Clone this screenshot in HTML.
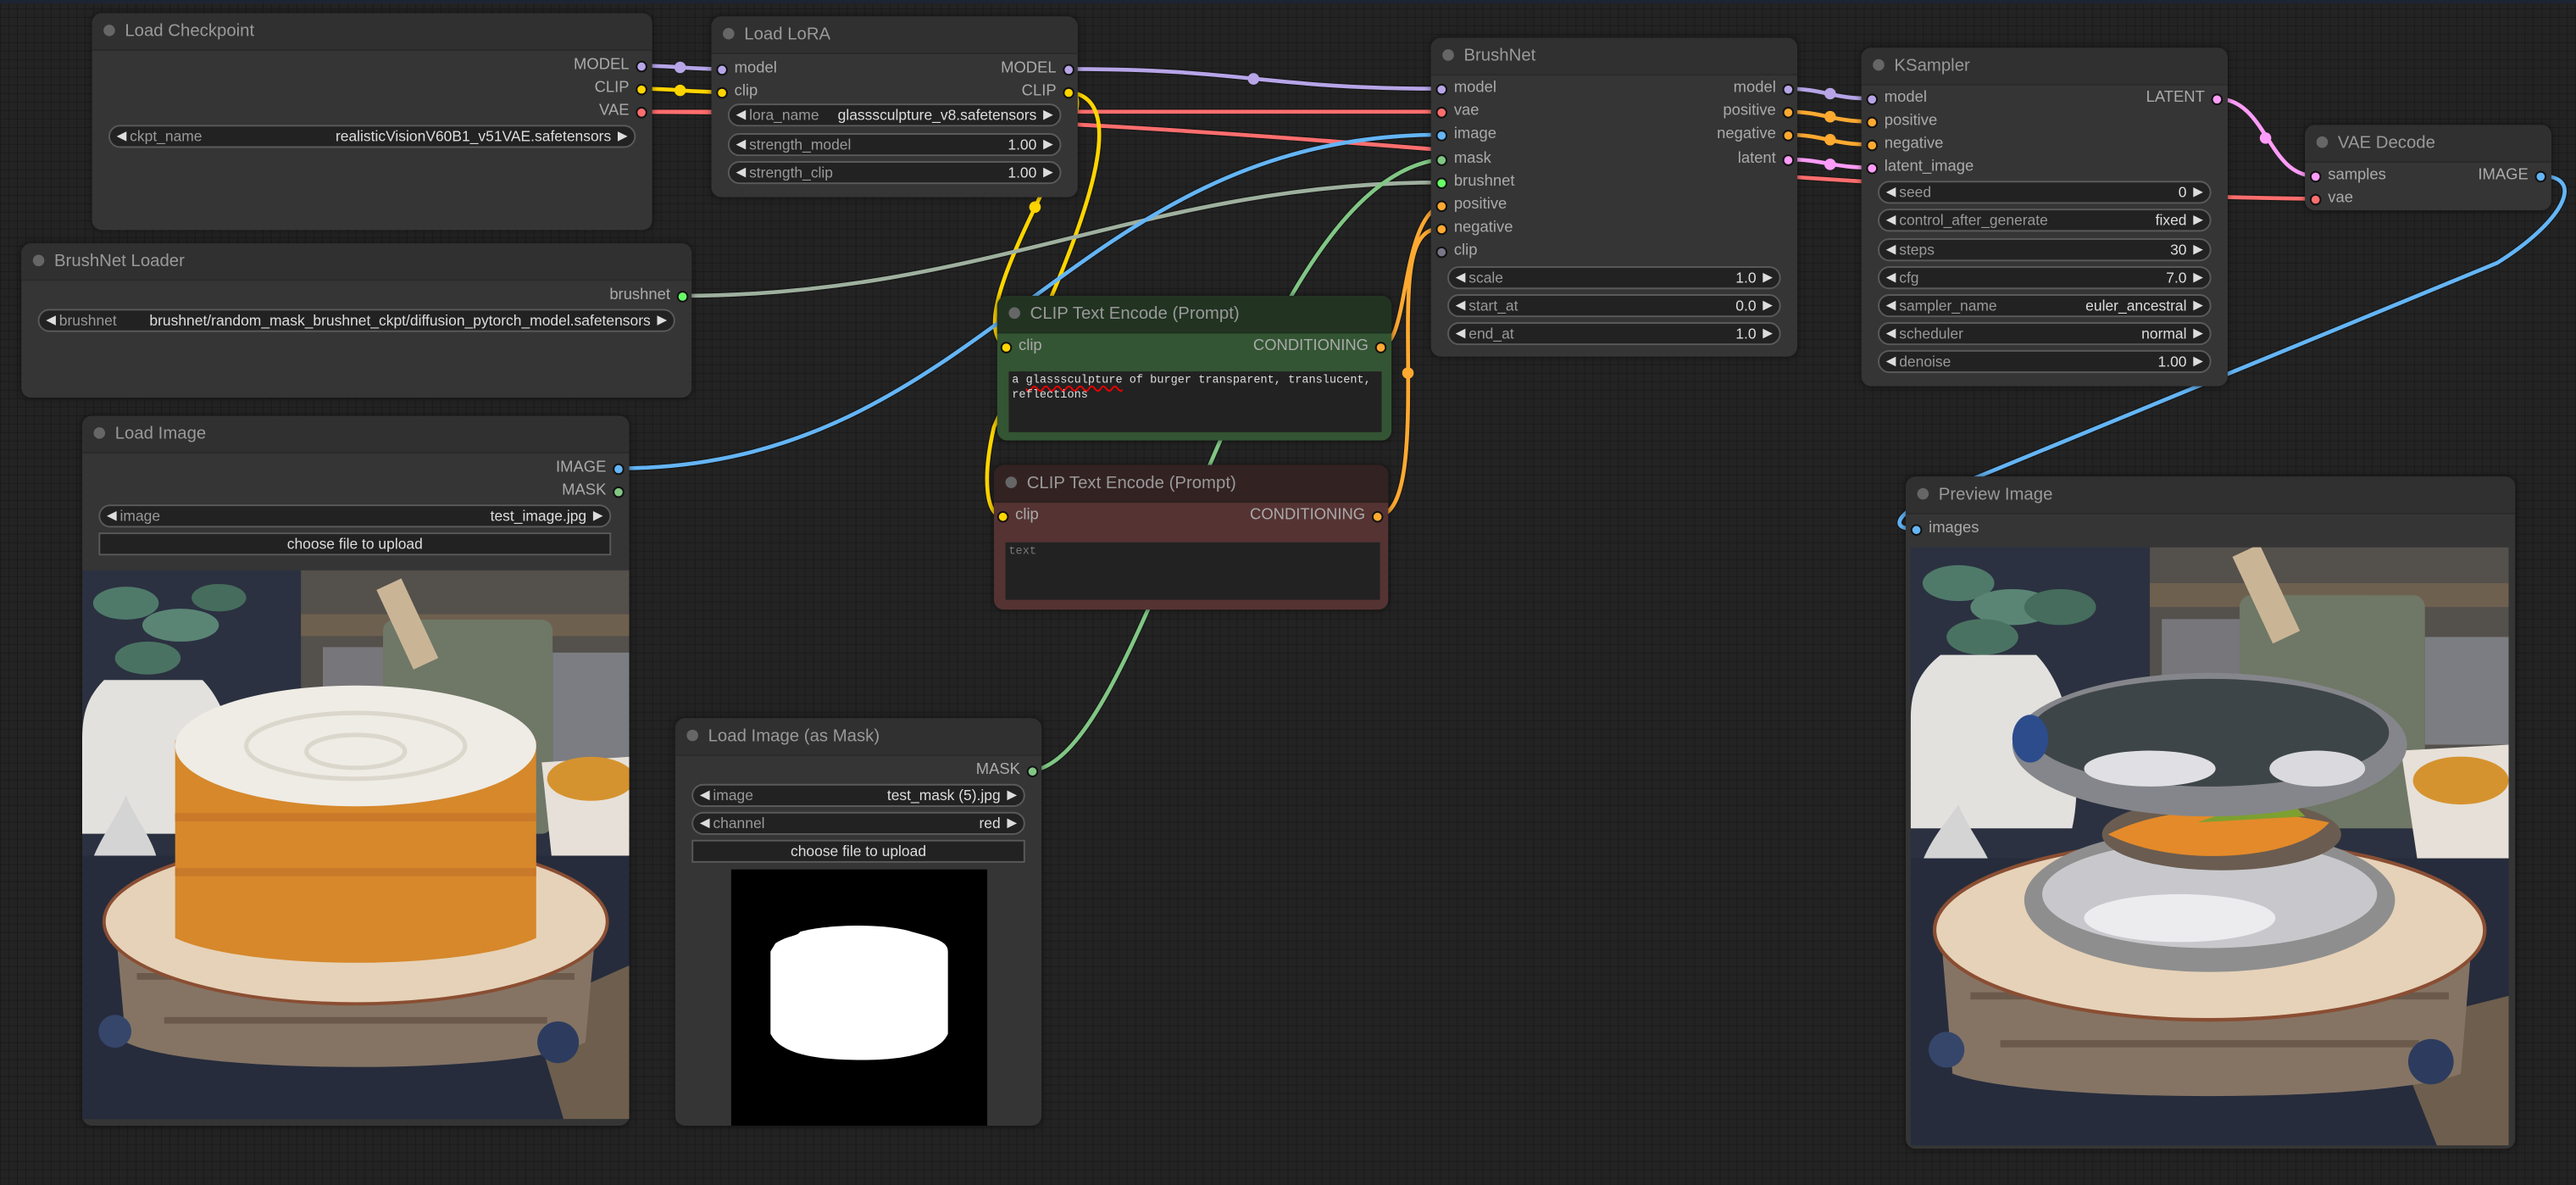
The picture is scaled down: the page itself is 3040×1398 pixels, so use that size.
<!DOCTYPE html>
<html><head><meta charset="utf-8"><style>
html,body{margin:0;padding:0;width:3040px;height:1397px;overflow:hidden;background:#222}
#s{position:absolute;left:0;top:0;width:1568px;height:721px;transform:scale(1.938776);transform-origin:0 0;
background-color:#232323;background-image:linear-gradient(#1b1b1b .6px,transparent .6px),linear-gradient(90deg,#1b1b1b .6px,transparent .6px);background-size:5.16px 5.16px;font-family:"Liberation Sans",sans-serif}
#top{position:absolute;left:0;top:0;width:1568px;height:2px;background:#1d2535}
.n{position:absolute;background:#353535;border-radius:6px;box-shadow:0 0 4px rgba(0,0,0,.5)}
.n .h{position:absolute;left:0;top:0;right:0;height:22px;background:#303030;border-radius:6px 6px 0 0;border-bottom:1px solid #2a2a2a}
.n .h i{position:absolute;left:7px;top:7px;width:7px;height:7px;border-radius:50%;background:#666}
.n .h span{position:absolute;left:20px;top:5px;font-size:10.5px;color:#999;white-space:nowrap}
.d{position:absolute;width:7px;height:7px;margin:-3.5px 0 0 -3.5px;border-radius:50%;border:.7px solid #111;box-sizing:border-box}
.t{position:absolute;font-size:9.5px;color:#aaa;line-height:12px;margin-top:-6px;white-space:nowrap}
.w{position:absolute;height:14px;border-radius:7px;background:#222;border:1px solid #5a5a5a;box-sizing:border-box;font-size:9px;line-height:12px;white-space:nowrap}
.w::before{content:"";position:absolute;left:4px;top:2.5px;border-style:solid;border-width:3.5px 6px 3.5px 0;border-color:transparent #ddd transparent transparent}
.w::after{content:"";position:absolute;right:4px;top:2.5px;border-style:solid;border-width:3.5px 0 3.5px 6px;border-color:transparent transparent transparent #ddd}
.w .l{position:absolute;left:12px;color:#999}
.w .v{position:absolute;right:14px;color:#ddd}
.b{position:absolute;height:14px;background:#222;border:1px solid #5a5a5a;box-sizing:border-box;font-size:9px;line-height:12px;color:#ddd;text-align:center}
.ta{position:absolute;background:#222;font-family:"Liberation Mono","DejaVu Sans Mono",monospace;font-size:7px;line-height:9px;color:#ddd;padding:2px 2px;box-sizing:border-box;white-space:nowrap}
</style></head><body><div id="s">
<div id="top"></div>
<svg width="1568" height="721" style="position:absolute;left:0;top:0" fill="none" stroke-linecap="round">
<g stroke="#111" stroke-width="3.6" opacity=".6">
<path d="M390,40 C410,40 420,42 439,42"/><path d="M390,54 C410,54 420,56 439,56"/>
<path d="M390,68 C600,68 700,68 877,68"/><path d="M390,68 C800,70 1000,115 1409,121"/>
<path d="M650,42 C760,42 770,54 877,54"/>
<path d="M650,56 C680,56 580,190 612,211"/><path d="M650,56 C700,60 640,180 605,260 C598,290 600,314 610,314"/>
<path d="M415,180 C600,180 700,111 877,111"/><path d="M376,285 C600,285 650,82 877,82"/>
<path d="M628,469 C700,460 760,110 877,97"/>
<path d="M840,211 C858,211 852,135 877,125"/><path d="M838,314 C860,314 857,250 857,200 C857,160 860,139 877,139"/>
<path d="M1546,107 C1575,107 1560,135 1520,160 L1180,300 C1150,315 1152,322 1166,322"/>
</g>
<g stroke-width="2.4">
<path stroke="#b7a5e8" d="M390,40 C410,40 420,42 439,42"/>
<path stroke="#ffd500" d="M390,54 C410,54 420,56 439,56"/>
<path stroke="#ff6e6e" d="M390,68 C600,68 700,68 877,68"/>
<path stroke="#ff6e6e" d="M390,68 C800,70 1000,115 1409,121"/>
<path stroke="#b7a5e8" d="M650,42 C760,42 770,54 877,54"/>
<path stroke="#ffd500" d="M650,56 C680,56 580,190 612,211"/>
<path stroke="#ffd500" d="M650,56 C700,60 640,180 605,260 C598,290 600,314 610,314"/>
<path stroke="#9fb09f" d="M415,180 C600,180 700,111 877,111"/>
<path stroke="#64b5f6" d="M376,285 C600,285 650,82 877,82"/>
<path stroke="#81c784" d="M628,469 C700,460 760,110 877,97"/>
<path stroke="#ffa931" d="M840,211 C858,211 852,135 877,125"/>
<path stroke="#ffa931" d="M838,314 C860,314 857,250 857,200 C857,160 860,139 877,139"/>
<path stroke="#b7a5e8" d="M1088,54 C1110,54 1115,60 1139,60"/>
<path stroke="#ffa931" d="M1088,68 C1110,68 1115,74 1139,74"/>
<path stroke="#ffa931" d="M1088,82 C1110,82 1115,88 1139,88"/>
<path stroke="#ff9cf9" d="M1088,97 C1110,97 1115,102 1139,102"/>
<path stroke="#ff9cf9" d="M1349,60 C1380,60 1380,107 1409,107"/>
<path stroke="#64b5f6" d="M1546,107 C1575,107 1560,135 1520,160 L1180,300 C1150,315 1152,322 1166,322"/>
</g>
<g>
<circle cx="414" cy="41" r="3.5" fill="#b7a5e8"/><circle cx="414" cy="55" r="3.5" fill="#ffd500"/>
<circle cx="763" cy="48" r="3.5" fill="#b7a5e8"/><circle cx="630" cy="126" r="3.5" fill="#ffd500"/>
<circle cx="857" cy="227" r="3.5" fill="#ffa931"/>
<circle cx="1114" cy="57" r="3.5" fill="#b7a5e8"/><circle cx="1114" cy="71" r="3.5" fill="#ffa931"/>
<circle cx="1114" cy="85" r="3.5" fill="#ffa931"/><circle cx="1114" cy="100" r="3.5" fill="#ff9cf9"/>
<circle cx="1379" cy="84" r="3.5" fill="#ff9cf9"/>
</g>
</svg>

<div class="n" style="left:56px;top:8px;width:341px;height:132px"><div class="h"><i></i><span>Load Checkpoint</span></div></div>
<span class="t" style="right:1185px;top:40px">MODEL</span><i class="d" style="left:390px;top:40px;background:#b7a5e8"></i>
<span class="t" style="right:1185px;top:54px">CLIP</span><i class="d" style="left:390px;top:54px;background:#ffd500"></i>
<span class="t" style="right:1185px;top:68px">VAE</span><i class="d" style="left:390px;top:68px;background:#ff6e6e"></i>
<div class="w" style="left:66px;top:76px;width:321px"><span class="l">ckpt_name</span><span class="v">realisticVisionV60B1_v51VAE.safetensors</span></div>

<div class="n" style="left:433px;top:10px;width:223px;height:110px"><div class="h"><i></i><span>Load LoRA</span></div></div>
<i class="d" style="left:439px;top:42px;background:#b7a5e8"></i><span class="t" style="left:447px;top:42px">model</span>
<i class="d" style="left:439px;top:56px;background:#ffd500"></i><span class="t" style="left:447px;top:56px">clip</span>
<span class="t" style="right:925px;top:42px">MODEL</span><i class="d" style="left:650px;top:42px;background:#b7a5e8"></i>
<span class="t" style="right:925px;top:56px">CLIP</span><i class="d" style="left:650px;top:56px;background:#ffd500"></i>
<div class="w" style="left:443px;top:63px;width:203px"><span class="l">lora_name</span><span class="v">glasssculpture_v8.safetensors</span></div>
<div class="w" style="left:443px;top:81px;width:203px"><span class="l">strength_model</span><span class="v">1.00</span></div>
<div class="w" style="left:443px;top:98px;width:203px"><span class="l">strength_clip</span><span class="v">1.00</span></div>

<div class="n" style="left:13px;top:148px;width:408px;height:94px"><div class="h"><i></i><span>BrushNet Loader</span></div></div>
<span class="t" style="right:1160px;top:180px">brushnet</span><i class="d" style="left:415px;top:180px;background:#6f6"></i>
<div class="w" style="left:23px;top:188px;width:388px"><span class="l">brushnet</span><span class="v">brushnet/random_mask_brushnet_ckpt/diffusion_pytorch_model.safetensors</span></div>

<div class="n" style="left:50px;top:253px;width:333px;height:432px"><div class="h"><i></i><span>Load Image</span></div></div>
<span class="t" style="right:1199px;top:285px">IMAGE</span><i class="d" style="left:376px;top:285px;background:#64b5f6"></i>
<span class="t" style="right:1199px;top:299px">MASK</span><i class="d" style="left:376px;top:299px;background:#81c784"></i>
<div class="w" style="left:60px;top:307px;width:312px"><span class="l">image</span><span class="v">test_image.jpg</span></div>
<div class="b" style="left:60px;top:324px;width:312px">choose file to upload</div>
<svg style="position:absolute;left:50px;top:347px" width="333" height="334" viewBox="0 0 100 100" preserveAspectRatio="none">
<rect width="100" height="100" fill="#2b3140"/>
<rect x="40" y="0" width="60" height="36" fill="#54504b"/><rect x="40" y="8" width="60" height="4" fill="#6e604f"/><rect x="44" y="14" width="12" height="22" fill="#77767a"/><rect x="86" y="15" width="14" height="20" fill="#7c7d82"/>
<ellipse cx="8" cy="6" rx="6" ry="3" fill="#4f7a6a"/><ellipse cx="18" cy="10" rx="7" ry="3" fill="#5a8575"/><ellipse cx="12" cy="16" rx="6" ry="3" fill="#4a7262"/><ellipse cx="25" cy="5" rx="5" ry="2.5" fill="#456c5c"/>
<path d="M4,20 C0,24 0,28 0,32 L0,48 L28,48 C30,40 28,26 22,20 Z" fill="#e3e1de"/>
<rect x="55" y="9" width="31" height="39" rx="2" fill="#6f7766"/><rect x="57" y="2" width="5" height="16" fill="#c9b596" transform="rotate(-25 59 10)"/>
<path d="M84,35 L100,34 L100,56 L86,54 Z" fill="#e6e0d8"/><ellipse cx="93" cy="38" rx="8" ry="4" fill="#d5932f"/>
<path d="M1,56 C2,50 6,46 8,41 C10,46 14,50 14,55 Z" fill="#d4d4d4"/>
<rect x="0" y="52" width="100" height="48" fill="#262c3c"/>
<path d="M82,80 L100,72 L100,100 L88,100 Z" fill="#6e5e4d"/>
<path d="M6,64 L94,64 L92,86 C80,92 20,92 8,86 Z" fill="#857464"/><path d="M10,74 L90,74 M15,82 L85,82" stroke="#6b5a4b" stroke-width="1.2"/>
<ellipse cx="50" cy="64" rx="46" ry="15" fill="#e6d2b8" stroke="#8a4e33" stroke-width=".6"/>
<path d="M17,31 L83,31 L83,67 C70,73 30,73 17,67 Z" fill="#d6882b"/><path d="M17,45 L83,45 M17,55 L83,55" stroke="#c8792a" stroke-width="1.5"/>
<ellipse cx="50" cy="32" rx="33" ry="11" fill="#efece5"/><ellipse cx="50" cy="32" rx="20" ry="6" fill="none" stroke="#dcd7cc" stroke-width=".8"/><ellipse cx="50" cy="33" rx="9" ry="3" fill="none" stroke="#dcd7cc" stroke-width=".8"/>
<circle cx="6" cy="84" r="3" fill="#35466a"/><circle cx="87" cy="86" r="3.8" fill="#2d3c5e"/>
</svg>

<div class="n" style="left:871px;top:23px;width:223px;height:194px"><div class="h"><i></i><span>BrushNet</span></div></div>
<i class="d" style="left:877px;top:54px;background:#b7a5e8"></i><span class="t" style="left:885px;top:54px">model</span>
<i class="d" style="left:877px;top:68px;background:#ff6e6e"></i><span class="t" style="left:885px;top:68px">vae</span>
<i class="d" style="left:877px;top:82px;background:#64b5f6"></i><span class="t" style="left:885px;top:82px">image</span>
<i class="d" style="left:877px;top:97px;background:#81c784"></i><span class="t" style="left:885px;top:97px">mask</span>
<i class="d" style="left:877px;top:111px;background:#6f6"></i><span class="t" style="left:885px;top:111px">brushnet</span>
<i class="d" style="left:877px;top:125px;background:#ffa931"></i><span class="t" style="left:885px;top:125px">positive</span>
<i class="d" style="left:877px;top:139px;background:#ffa931"></i><span class="t" style="left:885px;top:139px">negative</span>
<i class="d" style="left:877px;top:153px;background:#778"></i><span class="t" style="left:885px;top:153px">clip</span>
<span class="t" style="right:487px;top:54px">model</span><i class="d" style="left:1088px;top:54px;background:#b7a5e8"></i>
<span class="t" style="right:487px;top:68px">positive</span><i class="d" style="left:1088px;top:68px;background:#ffa931"></i>
<span class="t" style="right:487px;top:82px">negative</span><i class="d" style="left:1088px;top:82px;background:#ffa931"></i>
<span class="t" style="right:487px;top:97px">latent</span><i class="d" style="left:1088px;top:97px;background:#ff9cf9"></i>
<div class="w" style="left:881px;top:162px;width:203px"><span class="l">scale</span><span class="v">1.0</span></div>
<div class="w" style="left:881px;top:179px;width:203px"><span class="l">start_at</span><span class="v">0.0</span></div>
<div class="w" style="left:881px;top:196px;width:203px"><span class="l">end_at</span><span class="v">1.0</span></div>

<div class="n" style="left:1133px;top:29px;width:223px;height:206px"><div class="h"><i></i><span>KSampler</span></div></div>
<i class="d" style="left:1139px;top:60px;background:#b7a5e8"></i><span class="t" style="left:1147px;top:60px">model</span>
<i class="d" style="left:1139px;top:74px;background:#ffa931"></i><span class="t" style="left:1147px;top:74px">positive</span>
<i class="d" style="left:1139px;top:88px;background:#ffa931"></i><span class="t" style="left:1147px;top:88px">negative</span>
<i class="d" style="left:1139px;top:102px;background:#ff9cf9"></i><span class="t" style="left:1147px;top:102px">latent_image</span>
<span class="t" style="right:226px;top:60px">LATENT</span><i class="d" style="left:1349px;top:60px;background:#ff9cf9"></i>
<div class="w" style="left:1143px;top:110px;width:203px"><span class="l">seed</span><span class="v">0</span></div>
<div class="w" style="left:1143px;top:127px;width:203px"><span class="l">control_after_generate</span><span class="v">fixed</span></div>
<div class="w" style="left:1143px;top:145px;width:203px"><span class="l">steps</span><span class="v">30</span></div>
<div class="w" style="left:1143px;top:162px;width:203px"><span class="l">cfg</span><span class="v">7.0</span></div>
<div class="w" style="left:1143px;top:179px;width:203px"><span class="l">sampler_name</span><span class="v">euler_ancestral</span></div>
<div class="w" style="left:1143px;top:196px;width:203px"><span class="l">scheduler</span><span class="v">normal</span></div>
<div class="w" style="left:1143px;top:213px;width:203px"><span class="l">denoise</span><span class="v">1.00</span></div>

<div class="n" style="left:1403px;top:76px;width:150px;height:52px"><div class="h"><i></i><span>VAE Decode</span></div></div>
<i class="d" style="left:1409px;top:107px;background:#ff9cf9"></i><span class="t" style="left:1417px;top:107px">samples</span>
<i class="d" style="left:1409px;top:121px;background:#ff6e6e"></i><span class="t" style="left:1417px;top:121px">vae</span>
<span class="t" style="right:29px;top:107px">IMAGE</span><i class="d" style="left:1546px;top:107px;background:#64b5f6"></i>

<div class="n" style="left:607px;top:180px;width:240px;height:88px;background:#335533"><div class="h" style="background:#223322;border-bottom-color:#1f2f1f"><i></i><span>CLIP Text Encode (Prompt)</span></div></div>
<i class="d" style="left:612px;top:211px;background:#ffd500"></i><span class="t" style="left:620px;top:211px">clip</span>
<span class="t" style="right:735px;top:211px">CONDITIONING</span><i class="d" style="left:840px;top:211px;background:#ffa931"></i>
<div class="ta" style="left:614px;top:226px;width:227px;height:37px">a <span style="text-decoration:underline wavy #e00">glasssculpture</span> of burger transparent, translucent,<br>reflections</div>

<div class="n" style="left:605px;top:283px;width:240px;height:88px;background:#553333"><div class="h" style="background:#332222;border-bottom-color:#2e1e1e"><i></i><span>CLIP Text Encode (Prompt)</span></div></div>
<i class="d" style="left:610px;top:314px;background:#ffd500"></i><span class="t" style="left:618px;top:314px">clip</span>
<span class="t" style="right:737px;top:314px">CONDITIONING</span><i class="d" style="left:838px;top:314px;background:#ffa931"></i>
<div class="ta" style="left:612px;top:330px;width:228px;height:35px;color:#777">text</div>

<div class="n" style="left:411px;top:437px;width:223px;height:248px"><div class="h"><i></i><span>Load Image (as Mask)</span></div></div>
<span class="t" style="right:947px;top:469px">MASK</span><i class="d" style="left:628px;top:469px;background:#81c784"></i>
<div class="w" style="left:421px;top:477px;width:203px"><span class="l">image</span><span class="v">test_mask (5).jpg</span></div>
<div class="w" style="left:421px;top:494px;width:203px"><span class="l">channel</span><span class="v">red</span></div>
<div class="b" style="left:421px;top:511px;width:203px">choose file to upload</div>
<svg style="position:absolute;left:445px;top:529px" width="156" height="156" viewBox="0 0 156 156">
<rect width="156" height="156" fill="#000"/>
<path d="M27,45 C35,40 40,41 42,38 C60,33 95,33 110,38 C125,42 132,44 132,50 L132,100 C128,110 110,116 80,116 C50,116 30,112 24,100 L24,50 Z" fill="#fff"/>
</svg>

<div class="n" style="left:1160px;top:290px;width:371px;height:409px"><div class="h"><i></i><span>Preview Image</span></div></div>
<i class="d" style="left:1166px;top:322px;background:#64b5f6"></i><span class="t" style="left:1174px;top:322px">images</span>
<svg style="position:absolute;left:1163px;top:333px" width="364" height="364" viewBox="0 0 100 100" preserveAspectRatio="none">
<rect width="100" height="100" fill="#2b3140"/>
<rect x="40" y="0" width="60" height="34" fill="#54504b"/><rect x="40" y="6" width="60" height="4" fill="#6e604f"/><rect x="42" y="12" width="14" height="22" fill="#77767a"/><rect x="86" y="15" width="14" height="18" fill="#7c7d82"/>
<ellipse cx="8" cy="6" rx="6" ry="3" fill="#4f7a6a"/><ellipse cx="17" cy="10" rx="7" ry="3" fill="#5a8575"/><ellipse cx="12" cy="15" rx="6" ry="3" fill="#4a7262"/><ellipse cx="25" cy="10" rx="6" ry="3" fill="#456c5c"/>
<path d="M5,18 C0,22 0,26 0,30 L0,47 L27,47 C29,38 27,24 21,18 Z" fill="#e3e1de"/>
<rect x="55" y="8" width="31" height="39" rx="2" fill="#6f7766"/><rect x="57" y="0" width="5" height="16" fill="#c9b596" transform="rotate(-25 59 8)"/>
<path d="M82,34 L100,33 L100,56 L85,54 Z" fill="#e6e0d8"/><ellipse cx="92" cy="39" rx="8" ry="4" fill="#d5932f"/>
<path d="M1,56 C2,50 6,46 8,43 C10,48 14,52 14,56 Z" fill="#d4d4d4"/>
<rect x="0" y="52" width="100" height="48" fill="#262c3c"/>
<path d="M80,80 L100,75 L100,100 L88,100 Z" fill="#6e5e4d"/>
<path d="M5,64 L94,64 L92,88 C80,93 20,93 7,88 Z" fill="#857464"/><path d="M10,75 L90,75 M15,83 L85,83" stroke="#6b5a4b" stroke-width="1.2"/>
<ellipse cx="50" cy="64" rx="46" ry="15" fill="#e6d2b8" stroke="#8a4e33" stroke-width=".6"/>
<ellipse cx="50" cy="59" rx="31" ry="12" fill="#8e8e8e"/><ellipse cx="50" cy="58" rx="28" ry="9" fill="#c8c8cc"/><ellipse cx="45" cy="62" rx="16" ry="4" fill="#ececee"/>
<ellipse cx="52" cy="48" rx="20" ry="6" fill="#6a5c50"/><path d="M33,48 C45,42 60,44 70,46 C65,52 45,54 33,48 Z" fill="#e48a2a"/><path d="M48,46 L62,41 L66,45 Z" fill="#7da030"/>
<ellipse cx="50" cy="33" rx="33" ry="12" fill="#85868b"/><ellipse cx="50" cy="31" rx="30" ry="9" fill="#3e4548"/><ellipse cx="40" cy="37" rx="11" ry="3" fill="#e0e0e4"/><ellipse cx="68" cy="37" rx="8" ry="3" fill="#dadade"/><ellipse cx="20" cy="32" rx="3" ry="4" fill="#2c4c8c"/>
<circle cx="6" cy="84" r="3" fill="#35466a"/><circle cx="87" cy="86" r="3.8" fill="#2d3c5e"/>
</svg>
</div></body></html>
